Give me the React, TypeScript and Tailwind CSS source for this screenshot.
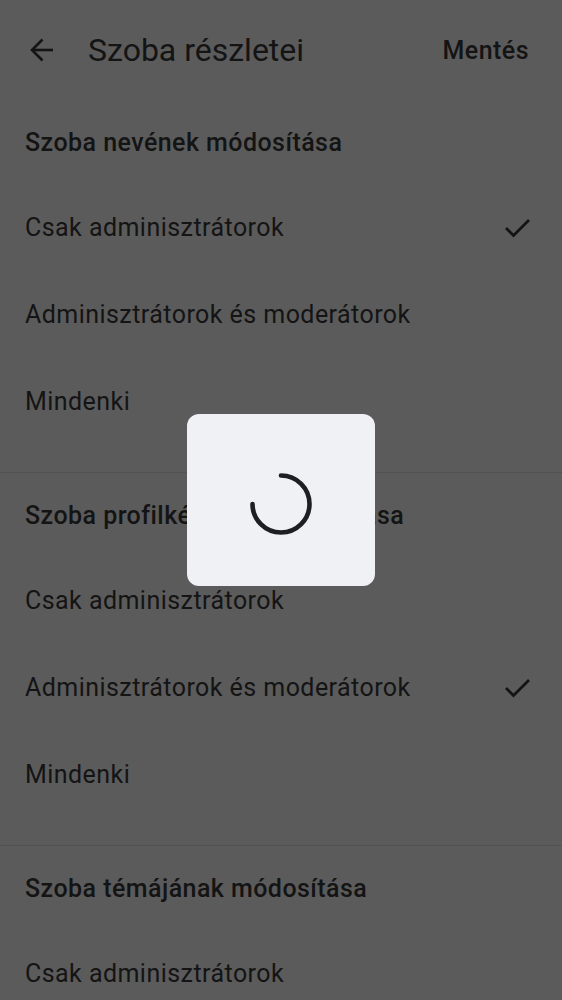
import React from 'react';

type Section = {
  title: string;
  options: string[];
  selected: number;
};

const sections: Section[] = [
  {
    title: 'Szoba nevének módosítása',
    options: ['Csak adminisztrátorok', 'Adminisztrátorok és moderátorok', 'Mindenki'],
    selected: 0,
  },
  {
    title: 'Szoba profilképének módosítása',
    options: ['Csak adminisztrátorok', 'Adminisztrátorok és moderátorok', 'Mindenki'],
    selected: 1,
  },
  {
    title: 'Szoba témájának módosítása',
    options: ['Csak adminisztrátorok', 'Adminisztrátorok és moderátorok', 'Mindenki'],
    selected: 1,
  },
];

function CheckIcon() {
  return (
    <svg width="28" height="20" viewBox="0 0 28 20" fill="none">
      <polyline
        points="3,10 10.5,17.5 26,2"
        stroke="currentColor"
        strokeWidth="2.8"
        strokeLinecap="butt"
        strokeLinejoin="miter"
      />
    </svg>
  );
}

function BackArrow() {
  return (
    <svg width="26" height="26" viewBox="0 0 26 26" fill="none">
      <path d="M24 13H3" stroke="currentColor" strokeWidth="2.6" />
      <path d="M13.5 2.5L3 13l10.5 10.5" stroke="currentColor" strokeWidth="2.6" />
    </svg>
  );
}

function Spinner() {
  // arc from 12 o'clock clockwise round to 9 o'clock
  return (
    <svg width="66" height="66" viewBox="0 0 66 66" fill="none">
      <path
        d="M33 4.5 A28.5 28.5 0 1 1 4.5 33"
        stroke="#1e1f23"
        strokeWidth="4.6"
        strokeLinecap="round"
      />
    </svg>
  );
}

export default function App() {
  return (
    <div
      className="relative w-[562px] h-[1000px] overflow-hidden bg-[#5b5b5b] text-[#141414]"
      style={{ fontFamily: 'Roboto, "Noto Sans", sans-serif' }}
    >
      <header className="flex h-[100px] items-center pl-[29px] pr-[33px]">
        <button className="flex items-center text-[#141414]">
          <BackArrow />
        </button>
        <h1 className="ml-[33px] flex-1 text-[32px] leading-none">Szoba részletei</h1>
        <button className="text-[25px] font-medium leading-none tracking-[0.45px]">Mentés</button>
      </header>

      {sections.map((section) => (
        <section key={section.title}>
          <div className="flex h-[84px] items-center px-[25px]">
            <h2 className="whitespace-nowrap text-[25px] font-medium leading-none tracking-[0.45px]">
              {section.title}
            </h2>
          </div>
          {section.options.map((opt, i) => (
            <div key={opt} className="flex h-[87px] items-center justify-between pl-[25px] pr-[31px]">
              <span className="whitespace-nowrap text-[25px] leading-none tracking-[0.45px]">{opt}</span>
              {i === section.selected && <CheckIcon />}
            </div>
          ))}
          <div className="h-[27px]" />
          <div className="h-px bg-[#525252]" />
        </section>
      ))}

      <div className="absolute inset-0 flex items-start justify-center pt-[414px]">
        <div className="flex h-[172px] w-[188px] items-center justify-center rounded-[12px] bg-[#f0f1f5] pt-[8px]">
          <Spinner />
        </div>
      </div>
    </div>
  );
}
